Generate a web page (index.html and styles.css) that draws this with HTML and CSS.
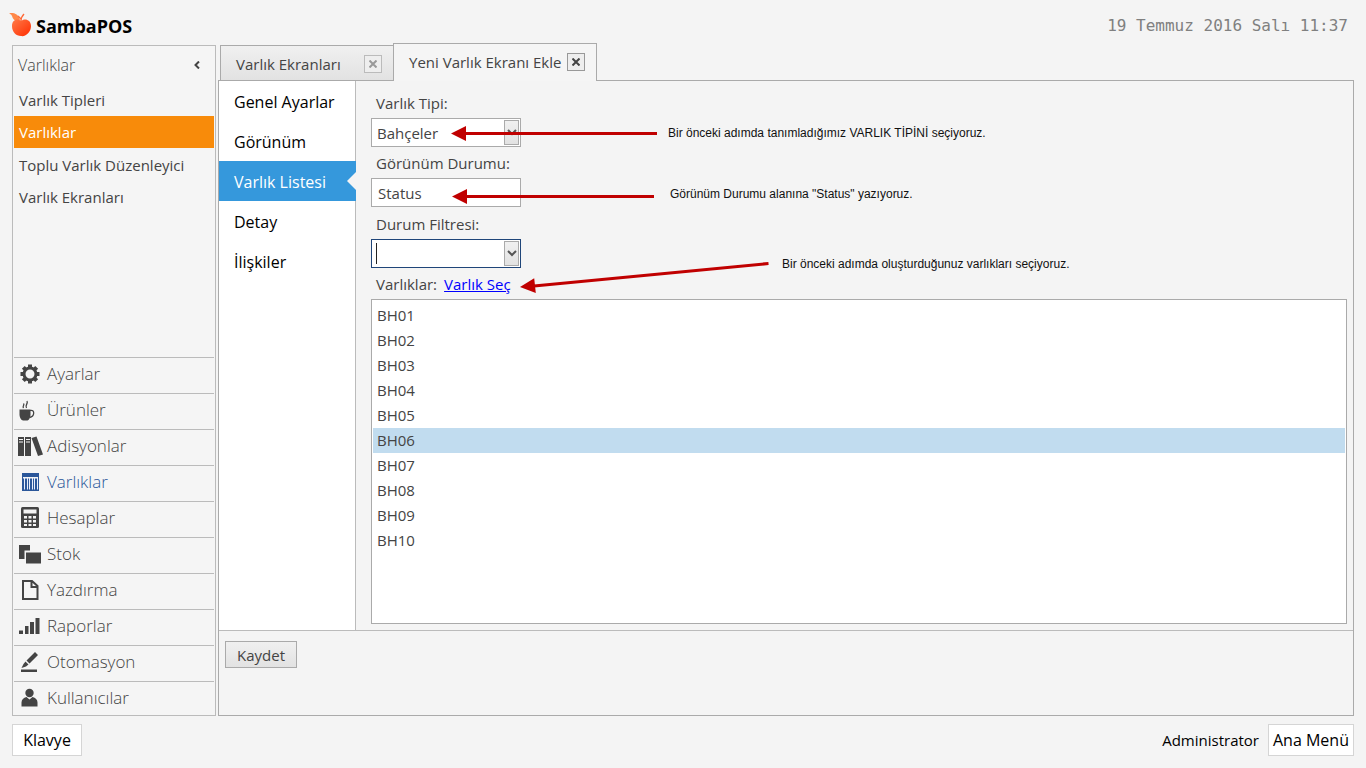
FILE: index.html
```html
<!DOCTYPE html>
<html lang="tr">
<head>
<meta charset="utf-8">
<meta name="viewport" content="width=device-width, initial-scale=1">
<title>SambaPOS</title>
<link rel="stylesheet" href="styles.css">
</head>
<body>
<header class="topbar">
  <h1 class="brand">
    <svg class="brand-logo" width="24" height="26" viewBox="0 0 24 26" aria-hidden="true">
      <defs><linearGradient id="apple" x1="0" y1="0" x2="1" y2="1"><stop offset="0" stop-color="#ff7a48"/><stop offset="1" stop-color="#ff2d00"/></linearGradient></defs>
      <path fill="#ff8848" d="M0 0C5 0 9 0 11 7C7 9 4 7 3 3C2 1 1 1 0 0z"/>
      <path fill="none" stroke="#ff6a38" stroke-width="1.400" d="M12 8C12 5 13 3 15 1M12 6L9 3"/>
      <path fill="url(#apple)" d="M12 8C15 5 22 6 22 13C22 19 17 24 12 23C7 23 3 19 3 13C3 7 8 5 12 8z"/>
    </svg>
    <span>SambaPOS</span>
  </h1>
  <time class="clock" datetime="2016-07-19T11:37">19 Temmuz 2016 Salı 11:37</time>
</header>

<div class="workspace">
  <aside class="sidebar">
    <div class="sidebar-head">
      <h2 class="sidebar-title">Varlıklar</h2>
      <button class="collapse" type="button" aria-label="Daralt">
        <svg width="8" height="8" viewBox="0 0 8 8"><path d="M6 0.500L2.500 4L6 7.500" fill="none" stroke="#444" stroke-width="2"/></svg>
      </button>
    </div>
    <nav class="pages">
      <a href="#">Varlık Tipleri</a>
      <a href="#" class="active" aria-current="page">Varlıklar</a>
      <a href="#">Toplu Varlık Düzenleyici</a>
      <a href="#">Varlık Ekranları</a>
    </nav>
    <nav class="modules">
      <a href="#"><svg viewBox="0 0 26 22"><circle cx="13" cy="11" r="6" fill="none" stroke="currentColor" stroke-width="3"/><path fill="none" stroke="currentColor" stroke-width="4" d="M13 1.500v3M13 17.500v3M3.500 11h3M19.500 11h3M6.300 4.300l2.100 2.100M17.600 15.600l2.100 2.100M6.300 17.700l2.100-2.100M17.600 6.400l2.100-2.100"/></svg>Ayarlar</a>
      <a href="#"><svg viewBox="0 0 26 22"><path fill="currentColor" d="M2.500 10.500h11v5c0 3-2 6-3 6H6C4.500 21.500 2.500 18.500 2.500 15.500z"/><path fill="none" stroke="currentColor" stroke-width="1.300" d="M13 11.500c5-1.500 5 6-0.500 7M6.500 9c-1.500-2 1.500-3 0-4.500M9.500 9c-2-3 2-4 0.500-7"/></svg>Ürünler</a>
      <a href="#"><svg viewBox="0 0 26 22"><path fill="currentColor" d="M1 2h6v19H1zM8 2h6v19H8zM14.500 3l5-1.500L26 19.500l-5 1.500z"/><path stroke="#f5f5f5" d="M2 4.500h4M2 7h4M9 4.500h4M9 7h4"/></svg>Adisyonlar</a>
      <a href="#" class="current"><svg viewBox="0 0 26 22"><path fill="currentColor" d="M5 2h17v18H5z"/><path fill="#f5f5f5" d="M6 6h15v1.500H6z"/><path stroke="#e9eefb" d="M7.500 7v11.500M10.500 7v11.500M12.500 7v11.500M15.500 7v11.500M17.500 7v11.500M20.500 7v11.500"/></svg>Varlıklar</a>
      <a href="#"><svg viewBox="0 0 26 22"><rect x="4" y="0" width="18" height="21" rx="1.500" fill="currentColor"/><path fill="#f5f5f5" d="M6.500 2.500h13v4h-13zM7 9h3v2.500H7zM11.500 9h3v2.500h-3zM16 9h3v2.500h-3zM7 13h3v2.500H7zM11.500 13h3v2.500h-3zM16 13h3v2.500h-3zM7 17h3v2H7zM11.500 17h3v2h-3zM16 17h3v2h-3z"/></svg>Hesaplar</a>
      <a href="#"><svg viewBox="0 0 26 22"><path fill="currentColor" d="M2 2h11v5.500H7.500V16H2zM9 9.500h15v11H9z"/></svg>Stok</a>
      <a href="#"><svg viewBox="0 0 26 22"><path fill="none" stroke="currentColor" stroke-width="2" d="M6 2h9l5.500 5v13H6zM14.500 2v6h6"/></svg>Yazdırma</a>
      <a href="#"><svg viewBox="0 0 26 22"><path fill="currentColor" d="M2 15.500h4V19H2zM8 11h3.500v8H8zM13 7h4v12h-4zM18.500 3h4v16h-4z"/></svg>Raporlar</a>
      <a href="#"><svg viewBox="0 0 26 22"><path fill="currentColor" d="M4 18.500h16V21H4zM18 1l3 3-8.500 8.500-3-3zM8.500 10.500l3 3L9 15.500l-4.500 1.500 2-4z"/></svg>Otomasyon</a>
      <a href="#"><svg viewBox="0 0 26 22"><circle cx="12.500" cy="6" r="4.200" fill="currentColor"/><path fill="currentColor" d="M4.500 19.500v-4c0-3 2-4.500 5-5.500l3 2.500 3-2.500c3 1 5 2.500 5 5.500v4z"/></svg>Kullanıcılar</a>
    </nav>
  </aside>

  <main class="content">
    <div class="tabs">
      <div class="tab"><span>Varlık Ekranları</span><button class="tab-close" type="button" aria-label="Kapat"><svg width="8" height="8" viewBox="0 0 8 8"><path d="M0.500 0.500l7 7M7.500 0.500l-7 7" stroke="currentColor" stroke-width="2"/></svg></button></div>
      <div class="tab selected"><span>Yeni Varlık Ekranı Ekle</span><button class="tab-close" type="button" aria-label="Kapat"><svg width="8" height="8" viewBox="0 0 8 8"><path d="M0.500 0.500l7 7M7.500 0.500l-7 7" stroke="currentColor" stroke-width="2"/></svg></button></div>
    </div>
    <div class="panel">
      <div class="editor">
        <nav class="sections">
          <a href="#">Genel Ayarlar</a>
          <a href="#">Görünüm</a>
          <a href="#" class="active" aria-current="true">Varlık Listesi</a>
          <a href="#">Detay</a>
          <a href="#">İlişkiler</a>
        </nav>
        <form class="form">
          <label for="type">Varlık Tipi:</label>
          <div class="combo">
            <select id="type"><option>Bahçeler</option></select>
            <span class="combo-arrow"><svg width="10" height="7" viewBox="0 0 10 7"><path d="M1 1l4 4 4-4" fill="none" stroke="#555" stroke-width="2"/></svg></span>
          </div>
          <label for="state">Görünüm Durumu:</label>
          <input class="field" id="state" type="text" value="Status">
          <label for="filter">Durum Filtresi:</label>
          <div class="combo focused">
            <select id="filter"><option></option></select>
            <span class="caret"></span>
            <span class="combo-arrow"><svg width="10" height="7" viewBox="0 0 10 7"><path d="M1 1l4 4 4-4" fill="none" stroke="#555" stroke-width="2"/></svg></span>
          </div>
          <div class="list-head"><span id="list-label">Varlıklar:</span><a href="#">Varlık Seç</a></div>
          <ul class="list" role="listbox" aria-labelledby="list-label">
            <li role="option">BH01</li>
            <li role="option">BH02</li>
            <li role="option">BH03</li>
            <li role="option">BH04</li>
            <li role="option">BH05</li>
            <li role="option" class="active" aria-selected="true">BH06</li>
            <li role="option">BH07</li>
            <li role="option">BH08</li>
            <li role="option">BH09</li>
            <li role="option">BH10</li>
          </ul>
          <svg class="arrows" width="420" height="220" viewBox="0 0 420 220" aria-hidden="true">
            <g stroke="#c00000" stroke-width="3">
              <path d="M108 52.500H301M109 115.500H298M178 205L412.500 182.500"/>
            </g>
            <path fill="#c00000" d="M95 52.500L110 45v15zM96 115.500L111 108v15zM164 206L178.200 197.300L179.800 212z"/>
          </svg>
          <p class="note note-type">Bir önceki adımda tanımladığımız VARLIK TİPİNİ seçiyoruz.</p>
          <p class="note note-state">Görünüm Durumu alanına "Status" yazıyoruz.</p>
          <p class="note note-list">Bir önceki adımda oluşturduğunuz varlıkları seçiyoruz.</p>
        </form>
      </div>
      <div class="actions"><button class="save" type="button">Kaydet</button></div>
    </div>
  </main>
</div>

<footer class="bottombar">
  <button type="button" class="keyboard">Klavye</button>
  <span class="user">Administrator</span>
  <button type="button" class="main-menu">Ana Menü</button>
</footer>
</body>
</html>
```
FILE: styles.css
```css
* { box-sizing: border-box; }

body {
  margin: 0;
  min-height: 100vh;
  display: flex;
  flex-direction: column;
  background: #f4f4f4;
  color: #444;
  font-family: "Open Sans", "Noto Sans", sans-serif;
  font-size: 15px;
  line-height: 20px;
}

button, input, select { font: inherit; color: inherit; }
a { color: inherit; text-decoration: none; }
svg { display: block; }

.topbar {
  display: flex;
  justify-content: space-between;
  align-items: center;
  height: 43px;
  padding: 8px 18px 0 9px;
}
.brand {
  display: flex;
  align-items: center;
  gap: 3px;
  margin: 0;
  color: #000;
  font-size: 18px;
  font-weight: 700;
}
.brand-logo { flex: none; }
.clock {
  color: #808080;
  font-family: "DejaVu Sans Mono", monospace;
  font-size: 16px;
}

.workspace {
  flex: 1;
  display: flex;
  gap: 2px;
  padding: 0 12px;
}

.sidebar {
  display: flex;
  flex-direction: column;
  width: 204px;
  margin-top: 2px;
  border: 1px solid #bbb;
  background: #f5f5f5;
}
.sidebar-head {
  display: flex;
  justify-content: space-between;
  align-items: center;
  height: 38px;
  padding: 0 10px 0 5px;
}
.sidebar-title {
  margin: 0;
  font-size: 16px;
  font-weight: 300;
}
.collapse {
  padding: 4px;
  border: 0;
  background: none;
}
.pages { padding: 0 1px; }
.pages a {
  display: block;
  padding: 6px 5px;
}
.pages .active {
  margin-bottom: 1px;
  background: #f88b0a;
  color: #fff;
}

.modules { margin: auto 1px 0; }
.modules a {
  display: flex;
  align-items: center;
  gap: 4px;
  height: 36px;
  padding: 0 3px 4px;
  border-top: 1px solid #bbb;
  font-size: 17px;
  font-weight: 300;
}
.modules a:last-child { height: 34px; padding-bottom: 2px; }
.modules .current { color: #2b579a; }
.modules svg { width: 26px; height: 22px; }

.content {
  flex: 1;
  display: flex;
  flex-direction: column;
  min-width: 0;
}
.tabs {
  display: flex;
  align-items: flex-end;
  height: 38px;
  margin: 0 0 -1px 2px;
  z-index: 1;
}
.tab {
  display: flex;
  justify-content: space-between;
  align-items: center;
  width: 173px;
  height: 36px;
  padding: 2px 11px 0 15px;
  border: 1px solid #aaa;
  border-right: 0;
  background: linear-gradient(#f0f0f0, #e2e2e2);
}
.tab.selected {
  width: 204px;
  height: 38px;
  padding-bottom: 4px;
  border-right: 1px solid #aaa;
  border-bottom: 0;
  background: #f5f5f5;
}
.tab-close {
  display: grid;
  place-items: center;
  width: 18px;
  height: 18px;
  padding: 0;
  border: 1px solid #bbb;
  background: #eee;
  color: #999;
}
.selected .tab-close { border-color: #999; color: #444; }

.panel {
  flex: 1;
  display: flex;
  flex-direction: column;
  border: 1px solid #aaa;
}
.editor { flex: 1; display: flex; }
.sections {
  width: 137px;
  border-right: 1px solid #bbb;
  background: #fff;
  color: #000;
  font-size: 16px;
}
.sections a {
  display: block;
  padding: 11px 15px 9px;
}
.sections .active {
  position: relative;
  margin-right: -1px;
  background: #3598dc;
  color: #fff;
}
.sections .active::after {
  content: "";
  position: absolute;
  top: 11px;
  right: 0;
  border: 9px solid transparent;
  border-left: 0;
  border-right-color: #f4f4f4;
}

.form {
  flex: 1;
  position: relative;
  display: flex;
  flex-direction: column;
  padding: 6px 6px 6px 15px;
}
.form label, .list-head {
  padding: 6px 5px 5px;
}
.list-head { display: flex; gap: 7px; }
.list-head a { color: #00f; text-decoration: underline; }

.combo { position: relative; width: 150px; }
.combo select, .field {
  display: block;
  width: 150px;
  height: 29px;
  padding: 0 5px;
  border: 1px solid #aaa;
  border-radius: 0;
  outline: 0;
  background: #fff;
  appearance: none;
}
.field { margin-bottom: 1px; padding: 0 6px; }
.focused select { border-color: #1f4579; }
.combo-arrow {
  position: absolute;
  top: 2px;
  right: 2px;
  bottom: 2px;
  display: grid;
  place-items: center;
  width: 15px;
  border: 1px solid #aaa;
  background: linear-gradient(#f0f0f0, #e2e2e2);
  pointer-events: none;
}
.caret {
  position: absolute;
  top: 4px;
  bottom: 4px;
  left: 5px;
  width: 1px;
  background: #222;
}

.list {
  flex: 1;
  margin: 0;
  padding: 3px 1px;
  border: 1px solid #aaa;
  background: #fff;
  list-style: none;
}
.list li {
  padding: 0 4px;
  line-height: 25px;
}
.list .active { background: #c1dcef; }

.arrows {
  position: absolute;
  top: 0;
  left: 0;
  pointer-events: none;
}
.note {
  position: absolute;
  margin: 0;
  color: #111;
  font-family: "Liberation Sans", Arial, sans-serif;
  font-size: 12px;
  line-height: 16px;
  white-space: nowrap;
}
.note-type { top: 44px; left: 312px; }
.note-state { top: 105px; left: 314px; }
.note-list { top: 175px; left: 426px; }

.actions {
  height: 85px;
  padding: 10px 6px;
  border-top: 1px solid #bbb;
}
.save {
  width: 72px;
  height: 27px;
  padding: 0;
  border: 1px solid #aaa;
  background: linear-gradient(#f0f0f0, #e2e2e2);
}

.bottombar {
  display: flex;
  align-items: center;
  padding: 8px 12px 12px;
  color: #000;
}
.bottombar button {
  height: 32px;
  padding: 0;
  border: 1px solid #d5d5d5;
  background: #fff;
  font-size: 16px;
}
.bottombar .keyboard { width: 70px; }
.bottombar .main-menu { width: 86px; }
.user { margin: 0 9px 0 auto; }
```
